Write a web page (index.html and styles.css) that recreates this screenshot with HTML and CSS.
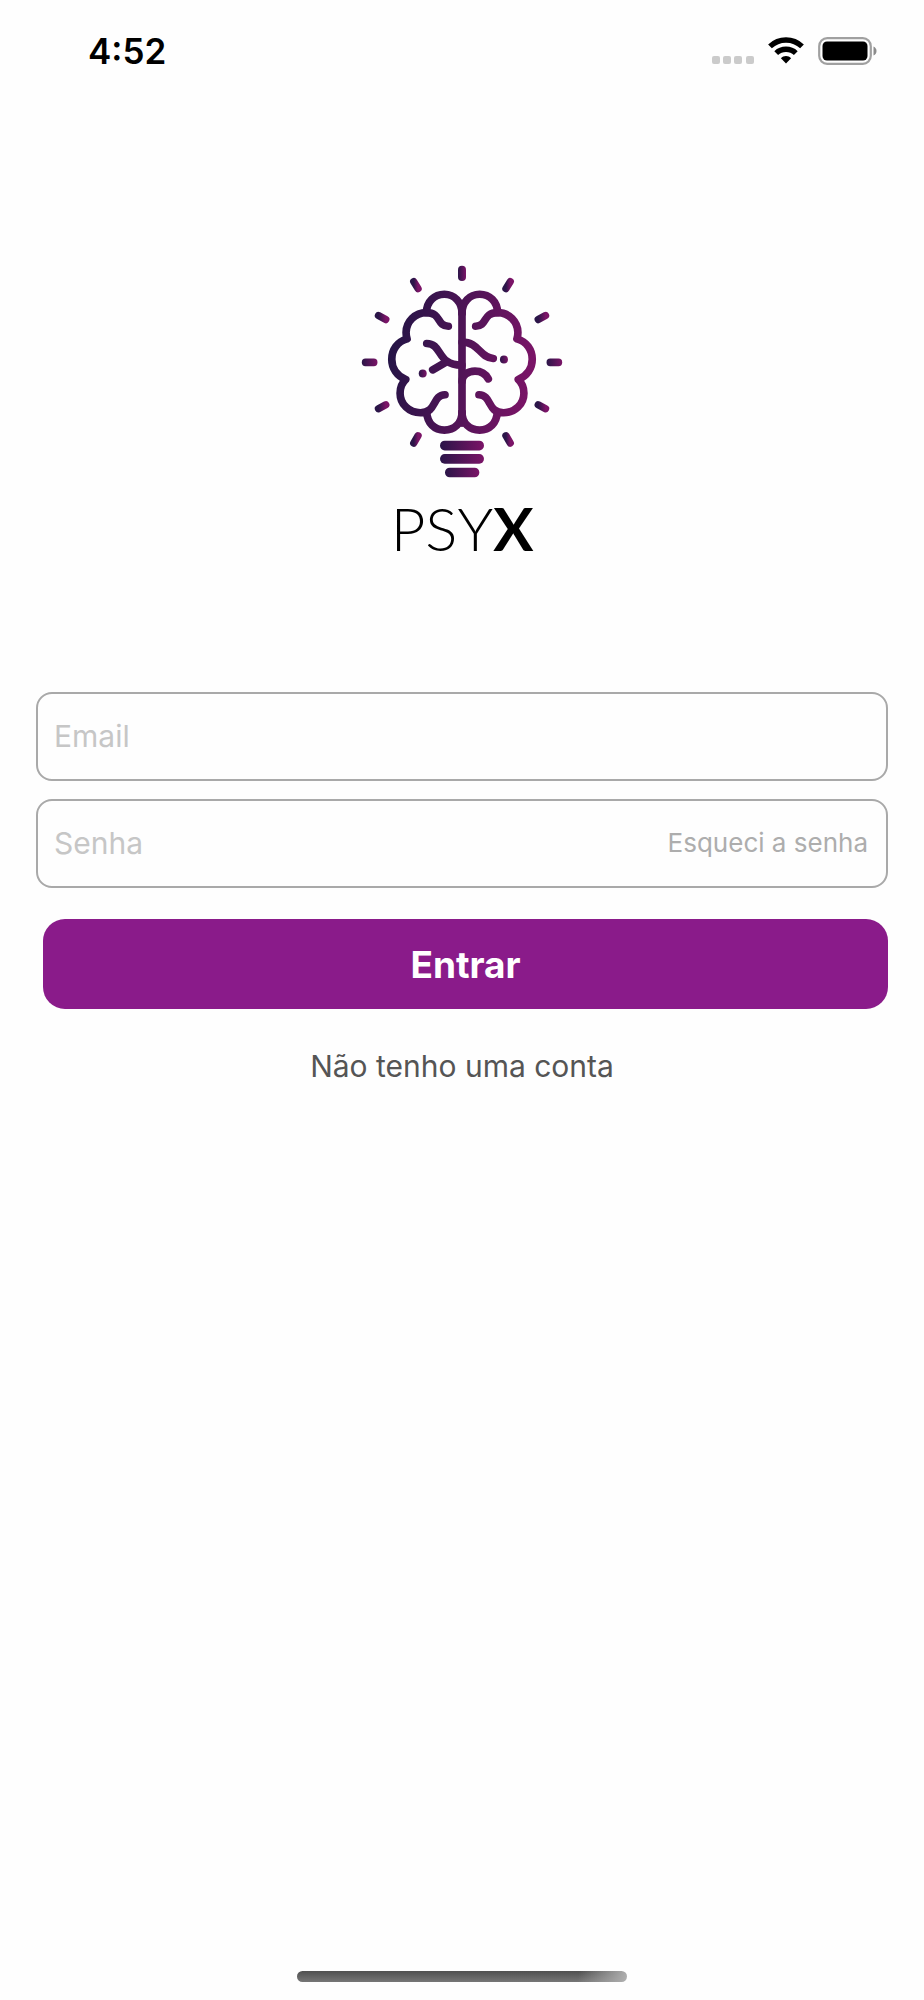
FILE: index.html
```html
<!DOCTYPE html>
<html lang="pt-BR">
<head>
<meta charset="utf-8">
<meta name="viewport" content="width=device-width, initial-scale=1">
<title>PSYX</title>
<link rel="stylesheet" href="styles.css">
</head>
<body>
<div class="screen">
  <header class="status">
    <time class="clock">4:52</time>
    <div class="status-icons">
      <svg class="dots" viewBox="0 0 42 26" aria-hidden="true"><g fill="#cbcbcb"><rect x="0" y="18" width="8" height="8" rx="2"/><rect x="11" y="18" width="8" height="8" rx="2"/><rect x="22" y="18" width="8" height="8" rx="2"/><rect x="34" y="18" width="8" height="8" rx="2"/></g></svg>
      <svg class="wifi" viewBox="0 0 36 27" aria-hidden="true"><g fill="none" stroke="#000" stroke-width="5.4"><path d="M2 9.4C11 .8 25 .8 34 9.400"/><path d="M8.200 16.100C13.500 11 22.500 11 27.800 16.100"/></g><path d="M12.900 21.200C15.500 18.400 20.500 18.400 23.100 21.200L18 26.600Z"/></svg>
      <svg class="battery" viewBox="0 0 60 28" aria-hidden="true"><rect x="1.200" y="1.200" width="51.600" height="25.600" rx="8" fill="none" stroke="#a0a0a0" stroke-width="2.200"/><rect x="4.500" y="4.500" width="45" height="19" rx="4.500"/><path d="M55.500 9.500Q58.500 11 58.500 14T55.500 18.500Z" fill="#8c8c8c"/></svg>
    </div>
  </header>

  <main class="login">
    <div class="brand">
      <svg class="bulb" viewBox="0 0 732 700" aria-hidden="true">
        <defs>
          <linearGradient id="left" gradientUnits="userSpaceOnUse" x1="150" y1="300" x2="580" y2="370"><stop offset="0" stop-color="#251446"/><stop offset="1" stop-color="#7b1467"/></linearGradient>
          <linearGradient id="right" gradientUnits="userSpaceOnUse" x1="582" y1="300" x2="152" y2="370"><stop offset="0" stop-color="#251446"/><stop offset="1" stop-color="#7b1467"/></linearGradient>
          <linearGradient id="small"><stop offset="0" stop-color="#2a1548"/><stop offset="1" stop-color="#7b1467"/></linearGradient>
          <g id="half">
            <path d="M366 190C366 157 343 133 313 133C283 133 260 154 259 188"/>
            <path d="M325 229C289 229 305 188 259 188C225 188 198 215 198 248Q198 259 201 267C172 275 155 300 155 328C155 356 171 378 197 389C185 400 180 415 180 430C180 463 207 489 241 489C291 489 275 437 315 435"/>
            <path d="M260 488C262 520 283 541 313 541C343 541 366 520 366 488"/>
          </g>
        </defs>
        <g fill="none" stroke-width="23" stroke-linecap="round" stroke-linejoin="round">
          <use href="#half" stroke="url(#left)"/>
          <use href="#half" stroke="url(#right)" transform="matrix(-1 0 0 1 732 0)"/>
          <g stroke="url(#left)">
            <path d="M366 168V520H366.100"/>
            <path d="M260 281C308 281 289 347 366 346"/>
            <path d="M278 360L314 339"/>
            <path d="M366 277C418 277 417 322 460 326"/>
            <path d="M366 395C366 376 384 364 405 364C427 364 438 374 445 387"/>
          </g>
          <g stroke="url(#small)" stroke-width="22">
            <path d="M221 95L234 116"/><path d="M511 95L498 116"/>
            <path d="M115 197L137 209"/><path d="M617 197L595 209"/>
            <path d="M115 477L137 465"/><path d="M617 477L595 465"/>
            <path d="M221 580L234 558"/><path d="M511 580L498 558"/>
          </g>
        </g>
        <g fill="url(#small)">
          <circle cx="248" cy="371" r="12"/><circle cx="492" cy="329" r="12"/>
          <rect x="354" y="47" width="24" height="46" rx="12"/>
          <rect x="65" y="326" width="47" height="23" rx="11"/><rect x="620" y="326" width="47" height="23" rx="11"/>
          <rect x="300" y="573" width="132" height="29" rx="14"/><rect x="300" y="613" width="132" height="29" rx="14"/><rect x="315" y="654" width="103" height="29" rx="14"/>
        </g>
      </svg>
      <h1 class="wordmark"><span>P</span><span>S</span><span>Y</span><b>X</b></h1>
    </div>

    <form class="form">
      <label class="field"><input type="email" placeholder="Email" aria-label="Email"></label>
      <div class="field">
        <input type="password" placeholder="Senha" aria-label="Senha">
        <a class="forgot" href="#">Esqueci a senha</a>
      </div>
      <button class="submit" type="submit">Entrar</button>
      <a class="signup" href="#">Não tenho uma conta</a>
    </form>
  </main>
  <div class="home-bar"></div>
</div>
</body>
</html>
```

FILE: styles.css
```css
* { box-sizing: border-box; }

body {
  margin: 0;
  background: #fefefe;
  color: #000;
  font-family: Inter, "Liberation Sans", sans-serif;
}

.screen {
  min-height: 100vh;
  display: flex;
  flex-direction: column;
}

.status {
  display: flex;
  align-items: center;
  justify-content: space-between;
  height: 101px;
  padding: 0 46px 0 88px;
}

.clock {
  font-size: 35px;
  font-weight: 600;
}

.status-icons {
  display: flex;
  align-items: center;
  gap: 14px;
}

.dots { width: 42px; height: 26px; }
.wifi { width: 36px; height: 27px; }
.battery { width: 60px; height: 28px; }

.login {
  flex: 1;
  padding: 149px 36px 0;
}

.brand {
  display: flex;
  flex-direction: column;
  align-items: center;
}

.bulb {
  width: 244px;
  height: 233px;
}

.wordmark {
  display: flex;
  margin: 13px 0 0;
  font-family: Lato, sans-serif;
  font-size: 60px;
  line-height: 64px;
  font-weight: 300;
}

.wordmark b { font-weight: 700; }

.form {
  display: flex;
  flex-direction: column;
  gap: 18px;
  margin-top: 132px;
}

.field {
  display: flex;
  align-items: center;
  height: 89px;
  padding: 0 18px 2px 16px;
  border: 2px solid #a9a9a9;
  border-radius: 16px;
}

.field input {
  flex: 1;
  min-width: 0;
  padding: 0;
  border: 0;
  outline: 0;
  background: transparent;
  font: inherit;
  font-size: 30px;
}

.field input::placeholder { color: #c6c6c6; opacity: 1; }

.forgot {
  color: #adadad;
  font-size: 26px;
  text-decoration: none;
}

.submit {
  height: 90px;
  margin: 13px 0 0 7px;
  border: 0;
  border-radius: 22px;
  background: #8a1b8a;
  color: #fff;
  font: inherit;
  font-size: 37px;
  font-weight: 700;
}

.signup {
  align-self: center;
  margin-top: 20px;
  color: #555;
  font-size: 30px;
  line-height: 38px;
  text-decoration: none;
}

.home-bar {
  align-self: center;
  width: 330px;
  height: 11px;
  margin-bottom: 18px;
  border-radius: 6px;
  background: linear-gradient(100deg, transparent 85%, #b0b0b0), linear-gradient(#505050, #767676);
}
```
